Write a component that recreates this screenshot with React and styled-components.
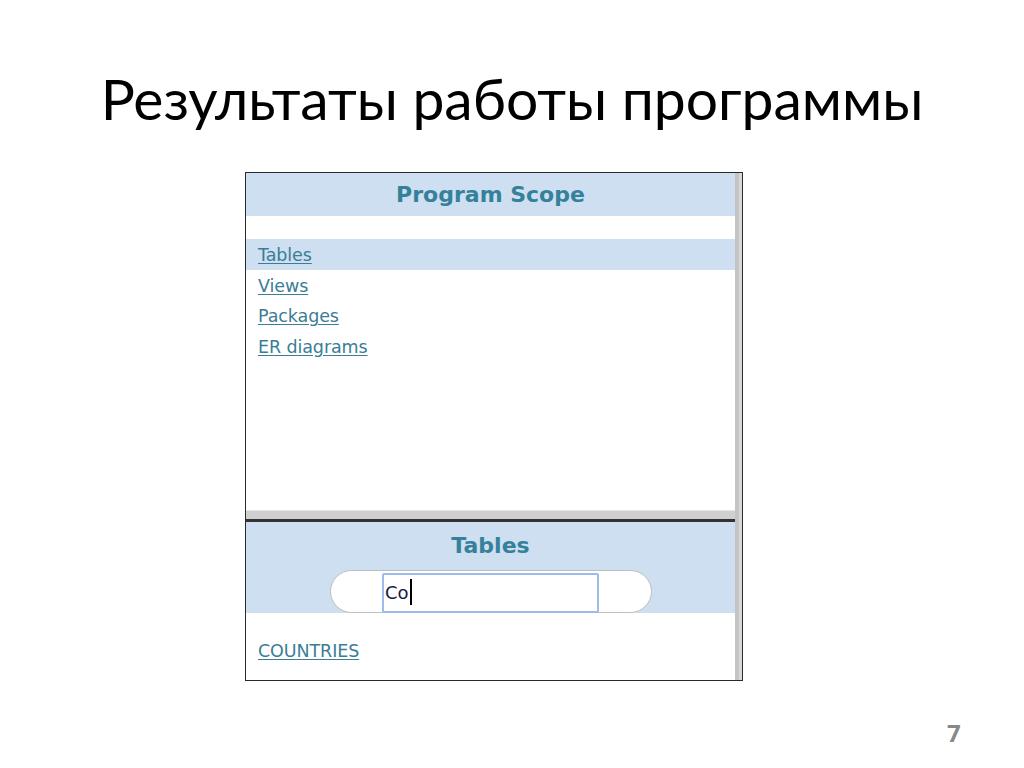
import React from "react";
import styled, { createGlobalStyle } from "styled-components";

const Global = createGlobalStyle`
  html, body { margin: 0; padding: 0; background: #fff; }
  body { width: 1024px; height: 768px; overflow: hidden; }
`;

const Slide = styled.div`
  width: 1024px;
  height: 768px;
  display: flex;
  flex-direction: column;
  align-items: center;
  position: relative;
  background: #fff;
`;

const Title = styled.h1`
  margin: 62px 0 0 0;
  height: 110px;
  font-family: Lato, "Open Sans", sans-serif;
  font-weight: 400;
  font-size: 57px;
  line-height: 72px;
  color: #000;
  text-align: center;
`;

const Panel = styled.div`
  align-self: flex-start;
  margin-left: 245px;
  width: 496px;
  height: 507px;
  border: 1px solid #2a2a2a;
  display: flex;
  background: #fff;
`;

const Content = styled.div`
  flex: 1;
  display: flex;
  flex-direction: column;
  min-width: 0;
`;

const Scrollbar = styled.div`
  width: 7px;
  background: linear-gradient(90deg, #c4c4c4 0, #c4c4c4 4px, #d8d8d8 4px, #d8d8d8 7px);
`;

const TopPane = styled.div`
  height: 337px;
  display: flex;
  flex-direction: column;
`;

const Header = styled.div`
  background: #cddff0;
  height: ${(p) => p.$h}px;
  display: flex;
  flex-direction: column;
  align-items: center;
  font-family: "DejaVu Sans", Verdana, sans-serif;
  font-weight: 700;
  font-size: 22px;
  color: #35819b;
  box-sizing: border-box;
  padding-top: ${(p) => p.$pt}px;
  line-height: 26px;
`;

const List = styled.div`
  margin-top: 23px;
  display: flex;
  flex-direction: column;
`;

const Row = styled.div`
  height: 30.5px;
  display: flex;
  align-items: center;
  padding-left: 12px;
  padding-top: 2px;
  box-sizing: border-box;
  background: ${(p) => (p.$active ? "#cddff0" : "transparent")};
`;

const Link = styled.a`
  font-family: "DejaVu Sans", Verdana, sans-serif;
  font-size: 17.5px;
  letter-spacing: -0.1px;
  color: #3a7d95;
  text-decoration: underline;
  text-underline-offset: 2px;
  cursor: pointer;
`;

const Splitter = styled.div`
  height: 8px;
  background: #d0d0d0;
  border-bottom: 3px solid #333;
  border-top: 1px solid #e6e6e6;
`;

const BottomPane = styled.div`
  flex: 1;
  display: flex;
  flex-direction: column;
`;

const Pill = styled.div`
  margin-top: 11px;
  width: 322px;
  height: 43px;
  box-sizing: border-box;
  border: 1px solid #bdbdbd;
  border-radius: 22px;
  background: #fff;
  display: flex;
  justify-content: center;
  align-items: center;
`;

const Input = styled.div`
  width: 217px;
  height: 40px;
  box-sizing: border-box;
  border: 2px solid #9dbcee;
  border-radius: 2px;
  background: #fff;
  margin-top: 2px;
  display: flex;
  align-items: flex-end;
  padding: 0 0 8px 1px;
  font-family: "DejaVu Sans", Tahoma, sans-serif;
  font-weight: 400;
  font-size: 18px;
  line-height: 20px;
  color: #1a1a40;
`;

const Caret = styled.span`
  display: inline-block;
  width: 2px;
  height: 26px;
  background: #000;
  margin-left: 1px;
  margin-bottom: -2px;
`;

const ResultArea = styled.div`
  padding: 22px 0 0 0;
`;

const PageNum = styled.div`
  position: absolute;
  left: 947px;
  top: 716px;
  font-family: "Open Sans", Lato, sans-serif;
  font-weight: 700;
  font-size: 24px;
  color: #888;
`;

export default function App() {
  const items = ["Tables", "Views", "Packages", "ER diagrams"];
  return (
    <Slide>
      <Global />
      <Title>Результаты работы программы</Title>
      <Panel>
        <Content>
          <TopPane>
            <Header $h={43} $pt={9}>Program Scope</Header>
            <List>
              {items.map((t, i) => (
                <Row key={t} $active={i === 0}>
                  <Link>{t}</Link>
                </Row>
              ))}
            </List>
          </TopPane>
          <Splitter />
          <BottomPane>
            <Header $h={91} $pt={11}>
              Tables
              <Pill>
                <Input>
                  Co<Caret />
                </Input>
              </Pill>
            </Header>
            <ResultArea>
              <Row>
                <Link>COUNTRIES</Link>
              </Row>
            </ResultArea>
          </BottomPane>
        </Content>
        <Scrollbar />
      </Panel>
      <PageNum>7</PageNum>
    </Slide>
  );
}
